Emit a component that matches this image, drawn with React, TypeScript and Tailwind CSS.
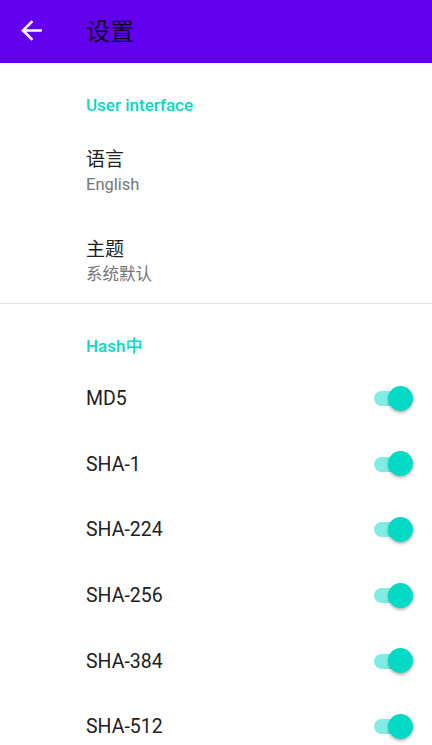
import React, { useState } from 'react';

const font = { fontFamily: 'Roboto, "Noto Sans CJK SC", sans-serif' };

function Category({ title, pad }: { title: string; pad: string }) {
  return (
    <div className={`${pad} pl-[86px] text-[17px] leading-[20px] font-medium text-[#03dac5]`}>
      {title}
    </div>
  );
}

function Item({ title, summary, pad }: { title: string; summary: string; pad: string }) {
  return (
    <div className={`pl-[86px] ${pad}`}>
      <div className="text-[19px] leading-[26px] text-[#212121]">{title}</div>
      <div className="text-[16.5px] leading-[24px] text-[#757575]">{summary}</div>
    </div>
  );
}

function Switch({ on, onToggle }: { on: boolean; onToggle: () => void }) {
  return (
    <button onClick={onToggle} className="relative w-[40px] h-[26px] mr-[19px]">
      <span
        className={`absolute left-[1px] top-[5.5px] w-[34px] h-[15px] rounded-full ${
          on ? 'bg-[#03dac5]/50' : 'bg-black/30'
        }`}
      />
      <span
        className={`absolute top-0 w-[25px] h-[25px] rounded-full shadow-[0_2px_3px_rgba(0,0,0,0.28)] ${
          on ? 'left-[15px] bg-[#03dac5]' : 'left-0 bg-[#fafafa]'
        }`}
      />
    </button>
  );
}

export default function App() {
  const algos = ['MD5', 'SHA-1', 'SHA-224', 'SHA-256', 'SHA-384', 'SHA-512'];
  const [enabled, setEnabled] = useState<Record<string, boolean>>(
    Object.fromEntries(algos.map((a) => [a, true]))
  );

  return (
    <div className="w-[432px] h-[745px] overflow-hidden bg-white" style={font}>
      {/* Toolbar */}
      <div className="h-[63px] bg-[#6200ee] flex items-center">
        <svg viewBox="0 0 24 24" className="w-[31px] h-[31px] ml-[16px] -mt-[3px] fill-white">
          <path d="M20 11H7.83l5.59-5.59L12 4l-8 8 8 8 1.41-1.41L7.83 13H20v-2z" />
        </svg>
        <div className="ml-[39px] text-[24px] leading-[30px] text-black/90">设置</div>
      </div>

      <Category title="User interface" pad="pt-[32px] pb-[12px]" />
      <Item title="语言" summary="English" pad="pt-[20px] pb-[20.5px]" />
      <Item title="主题" summary="系统默认" pad="pt-[19px] pb-[16.5px]" />

      <div className="h-px bg-[#dedede]" />

      <Category title="Hash中" pad="pt-[32px] pb-[10px]" />
      {algos.map((a) => (
        <div key={a} className="h-[65.6px] flex items-center justify-between pl-[86px]">
          <span className="text-[19.5px] text-[#212121]">{a}</span>
          <Switch
            on={enabled[a]}
            onToggle={() => setEnabled({ ...enabled, [a]: !enabled[a] })}
          />
        </div>
      ))}
    </div>
  );
}
